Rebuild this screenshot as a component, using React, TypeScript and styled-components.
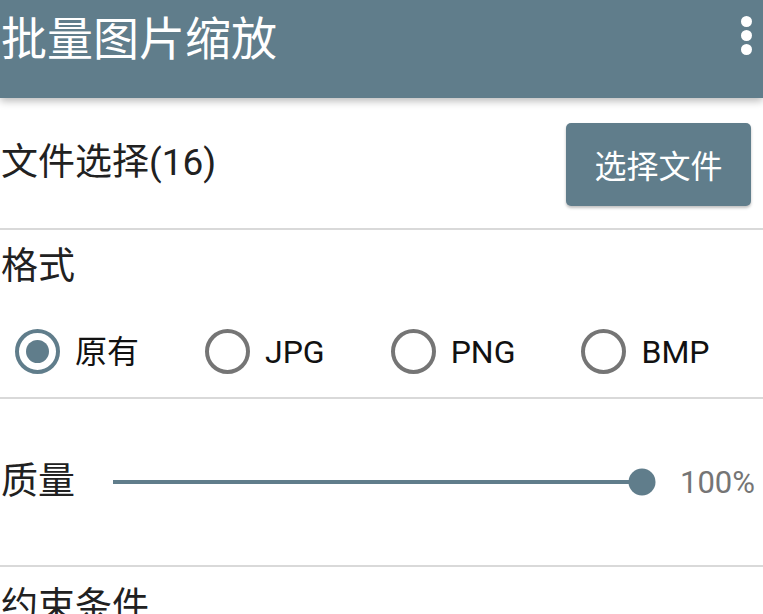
import styled, {createGlobalStyle} from 'styled-components';

const GlobalStyle = createGlobalStyle`
  html, body {
    margin: 0;
    padding: 0;
    background: #ffffff;
  }
  body {
    font-family: Roboto, "Noto Sans CJK SC", sans-serif;
    color: #212121;
    overflow: hidden;
  }
`;

const formats = ['原有', 'JPG', 'PNG', 'BMP'];

const App = () => {
  const picked = 0;
  const quality = 100;
  return (
    <Page>
      <GlobalStyle />
      <AppBar>
        <Title>批量图片缩放</Title>
        <Menu>
          <Dot />
          <Dot />
          <Dot />
        </Menu>
      </AppBar>
      <FileRow>
        <Label>文件选择(16)</Label>
        <PickButton>选择文件</PickButton>
      </FileRow>
      <FormatSection>
        <Heading>格式</Heading>
        <RadioGroup>
          {formats.map((f, i) => (
            <RadioItem key={f}>
              <Radio $checked={i === picked} />
              <RadioLabel>{f}</RadioLabel>
            </RadioItem>
          ))}
        </RadioGroup>
      </FormatSection>
      <QualityRow>
        <Label>质量</Label>
        <Track>
          <Fill style={{width: `${quality}%`}} />
          <Thumb style={{left: `${quality}%`}} />
        </Track>
        <Value>{quality}%</Value>
      </QualityRow>
      <LastSection>
        <Heading>约束条件</Heading>
      </LastSection>
    </Page>
  );
};

const Page = styled.div`
  width: 763px;
  height: 614px;
  overflow: hidden;
  background: #fff;
`;

const AppBar = styled.div`
  height: 98px;
  background-color: #607d8b;
  display: flex;
  align-items: flex-start;
  justify-content: space-between;
  padding: 0 11px 0 1px;
  box-sizing: border-box;
  box-shadow: 0 3px 8px rgba(0, 0, 0, 0.28);
  position: relative;
  z-index: 1;
`;

const Title = styled.div`
  color: #ffffff;
  font-size: 46px;
  line-height: 72px;
  padding-top: 3px;
`;

const Menu = styled.div`
  display: flex;
  flex-direction: column;
  gap: 3px;
  padding-top: 16px;
`;

const Dot = styled.span`
  width: 11px;
  height: 11px;
  border-radius: 50%;
  background: #ffffff;
`;

const Section = styled.div`
  border-bottom: 2px solid #d9d9d9;
`;

const FileRow = styled(Section)`
  height: 132px;
  box-sizing: border-box;
  display: flex;
  align-items: center;
  justify-content: space-between;
  padding: 0 12px 0 1px;
`;

const Label = styled.div`
  font-size: 37px;
  line-height: 48px;
  white-space: nowrap;
`;

const PickButton = styled.button`
  width: 185px;
  height: 83px;
  margin-top: 2px;
  border: none;
  border-radius: 5px;
  background-color: #607d8b;
  color: #ffffff;
  font-family: Roboto, "Noto Sans CJK SC", sans-serif;
  font-size: 32px;
  box-shadow: 0 2px 3px rgba(0, 0, 0, 0.25);
  padding: 0;
`;

const FormatSection = styled(Section)`
  height: 169px;
  box-sizing: border-box;
  padding-top: 17px;
`;

const LastSection = styled.div`
  padding-top: 20px;
`;

const Heading = styled.div`
  font-size: 37px;
  line-height: 40px;
  padding-left: 1px;
`;

const RadioGroup = styled.div`
  display: flex;
  align-items: center;
  gap: 66px;
  padding-left: 15px;
  margin-top: 42px;
`;

const RadioItem = styled.label`
  display: flex;
  align-items: center;
  gap: 15px;
`;

const Radio = styled.span<{$checked: boolean}>`
  width: 45px;
  height: 45px;
  box-sizing: border-box;
  border-radius: 50%;
  border: 4px solid ${(p) => (p.$checked ? '#607d8b' : '#757575')};
  display: flex;
  align-items: center;
  justify-content: center;
  &::after {
    content: '';
    width: 23px;
    height: 23px;
    border-radius: 50%;
    background: #607d8b;
    display: ${(p) => (p.$checked ? 'block' : 'none')};
  }
`;

const RadioLabel = styled.span`
  font-size: 32px;
  line-height: 40px;
  color: #111;
`;

const QualityRow = styled(Section)`
  height: 168px;
  box-sizing: border-box;
  display: flex;
  align-items: center;
  padding: 0 6px 0 1px;
`;

const Track = styled.div`
  position: relative;
  flex: 1;
  height: 4px;
  margin: 0 38px;
  background: #c8d3d8;
`;

const Fill = styled.div`
  height: 100%;
  background: #607d8b;
`;

const Thumb = styled.span`
  position: absolute;
  top: 50%;
  width: 27px;
  height: 27px;
  border-radius: 50%;
  background: #607d8b;
  transform: translate(-50%, -50%);
`;

const Value = styled.div`
  font-size: 31px;
  color: #757575;
  width: 77px;
`;

export default App;
